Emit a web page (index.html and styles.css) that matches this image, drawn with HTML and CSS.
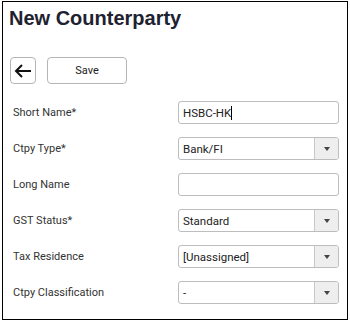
FILE: index.html
```html
<!DOCTYPE html>
<html lang="en">
<head>
  <meta charset="UTF-8">
  <title>New Counterparty</title>
  <link rel="stylesheet" href="styles.css">
</head>
<body>
  <div class="panel">
    <h1>New Counterparty</h1>

    <div class="toolbar">
      <button class="btn btn-back" aria-label="Back">
        <svg width="18" height="14" viewBox="0 0 18 14">
          <path d="M17 7H2M8 1L2 7l6 6" fill="none" stroke="#111" stroke-width="2"/>
        </svg>
      </button>
      <button class="btn btn-save">Save</button>
    </div>

    <form class="form">
      <div class="row">
        <label>Short Name*</label>
        <div class="field"><span class="text">HSBC-HK</span><span class="caret"></span></div>
      </div>
      <div class="row">
        <label>Ctpy Type*</label>
        <div class="field select"><span class="value">Bank/FI</span><span class="arrow"></span></div>
      </div>
      <div class="row">
        <label>Long Name</label>
        <div class="field"><span class="value"></span></div>
      </div>
      <div class="row">
        <label>GST Status*</label>
        <div class="field select"><span class="value">Standard</span><span class="arrow"></span></div>
      </div>
      <div class="row">
        <label>Tax Residence</label>
        <div class="field select"><span class="value">[Unassigned]</span><span class="arrow"></span></div>
      </div>
      <div class="row">
        <label>Ctpy Classification</label>
        <div class="field select"><span class="value">-</span><span class="arrow"></span></div>
      </div>
    </form>
  </div>
</body>
</html>
```

FILE: styles.css
```css
body {
  font-family: Roboto, 'Liberation Sans', sans-serif;
  background: #fff;
  margin: 0;
  padding: 0;
}

.panel {
  box-sizing: border-box;
  width: 346px;
  height: 319px;
  margin: 1px 0 0 2px;
  border: 1px solid #000;
  padding: 4px 8px 0 6px;
}

h1 {
  font-family: 'Liberation Sans', Arial, sans-serif;
  font-size: 20px;
  font-weight: bold;
  color: #1e2230;
  margin: 0;
  line-height: 24px;
}

.toolbar {
  display: flex;
  gap: 11px;
  margin-top: 27px;
  padding-left: 1px;
}

.btn {
  box-sizing: border-box;
  height: 27px;
  background: #fff;
  border: 1px solid #b5b5b5;
  border-radius: 4px;
  font-family: Roboto, sans-serif;
  font-size: 11px;
  color: #222;
  padding: 0;
  display: flex;
  align-items: center;
  justify-content: center;
}

.btn-back {
  width: 26px;
}

.btn-save {
  width: 80px;
}

.form {
  margin-top: 17px;
}

.row {
  display: flex;
  align-items: center;
  justify-content: space-between;
  height: 23px;
  margin-bottom: 13px;
  padding-left: 4px;
}

.row label {
  font-size: 11px;
  color: #333;
}

.field {
  box-sizing: border-box;
  width: 161px;
  height: 23px;
  border: 1px solid #bdbdbd;
  border-radius: 3px;
  display: flex;
  align-items: center;
  font-size: 11.5px;
  color: #222;
}

.value {
  flex: 1;
  padding-left: 4px;
}

.text {
  padding-left: 4px;
}

.caret {
  width: 1px;
  height: 14px;
  background: #000;
}

.arrow {
  box-sizing: border-box;
  width: 24px;
  height: 100%;
  background: #eeeeee;
  border-left: 1px solid #c8c8c8;
  border-radius: 0 3px 3px 0;
  display: flex;
  align-items: center;
  justify-content: center;
}

.arrow::after {
  content: "";
  border-left: 3.5px solid transparent;
  border-right: 3.5px solid transparent;
  border-top: 4px solid #444;
}
```
